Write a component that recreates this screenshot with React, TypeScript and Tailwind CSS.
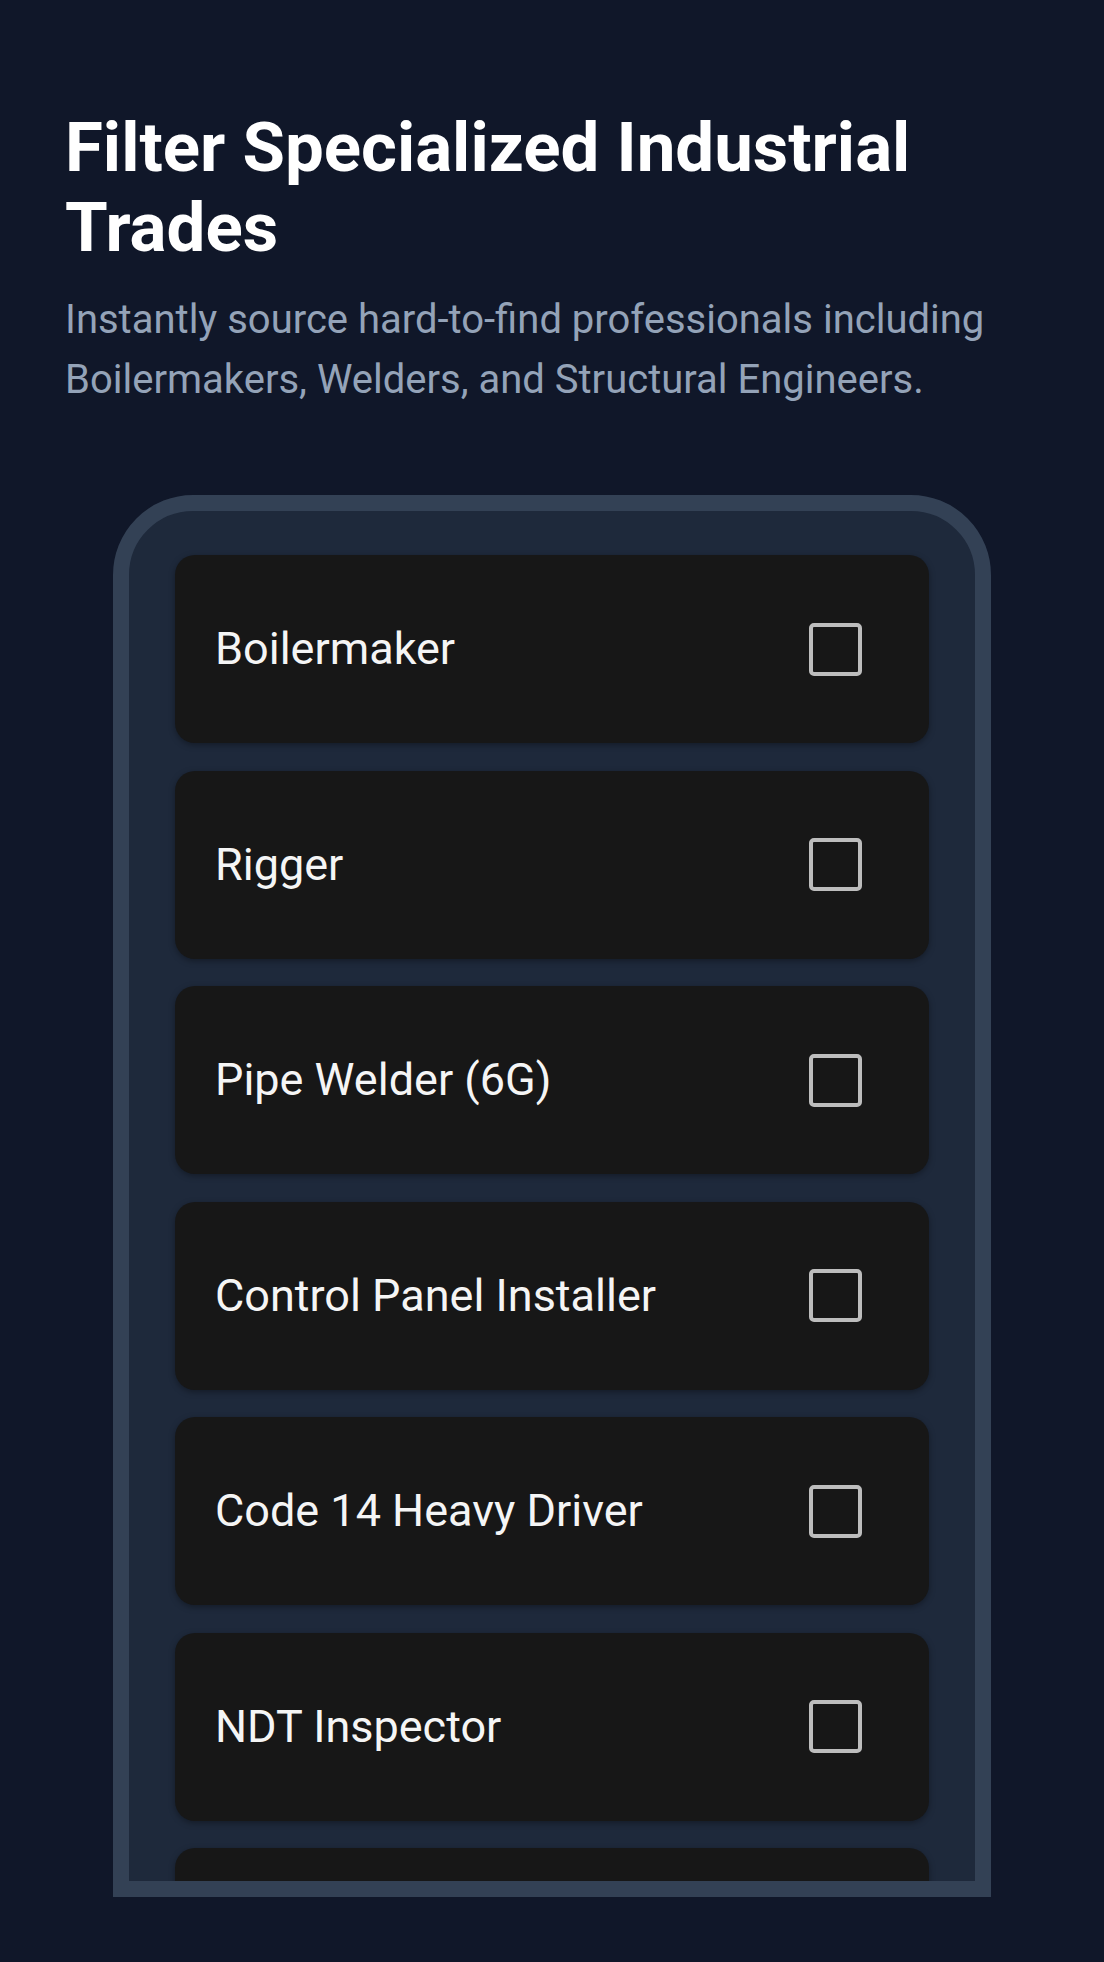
import React from 'react';

const trades = [
  'Boilermaker',
  'Rigger',
  'Pipe Welder (6G)',
  'Control Panel Installer',
  'Code 14 Heavy Driver',
  'NDT Inspector',
];

export default function App() {
  return (
    <div className="min-h-screen bg-[#101729] px-[65px] pt-[108px] pb-[65px] font-['Roboto',sans-serif]">
      <h1 className="text-[69px] font-bold leading-[80px] text-white">
        Filter Specialized Industrial Trades
      </h1>
      <p className="mt-[22px] text-[40px] leading-[60px] text-[#94a3b8]">
        Instantly source hard-to-find professionals including Boilermakers, Welders, and Structural Engineers.
      </p>

      <div className="mx-auto mt-[85px] h-[1402px] w-[878px] overflow-hidden rounded-t-[80px] border-[16px] border-[#334155] bg-[#1e293b]">
        <div className="flex flex-col gap-[27.5px] px-[46px] pt-[44px]">
          {trades.map((trade) => (
            <label
              key={trade}
              className="flex h-[188px] shrink-0 items-center justify-between rounded-[20px] bg-[#171717] pl-[40px] pr-[67px] shadow-[0_2px_6px_rgba(0,0,0,0.35)]"
            >
              <span className="text-[45px] text-[#f5f5f5]">{trade}</span>
              <span className="h-[53px] w-[53px] rounded-[5px] border-[4px] border-[#bdbdbd]" />
            </label>
          ))}
          {/* next item, cut off by the frame */}
          <div className="h-[188px] shrink-0 rounded-[20px] bg-[#171717] shadow-[0_2px_6px_rgba(0,0,0,0.35)]" />
        </div>
      </div>
    </div>
  );
}
